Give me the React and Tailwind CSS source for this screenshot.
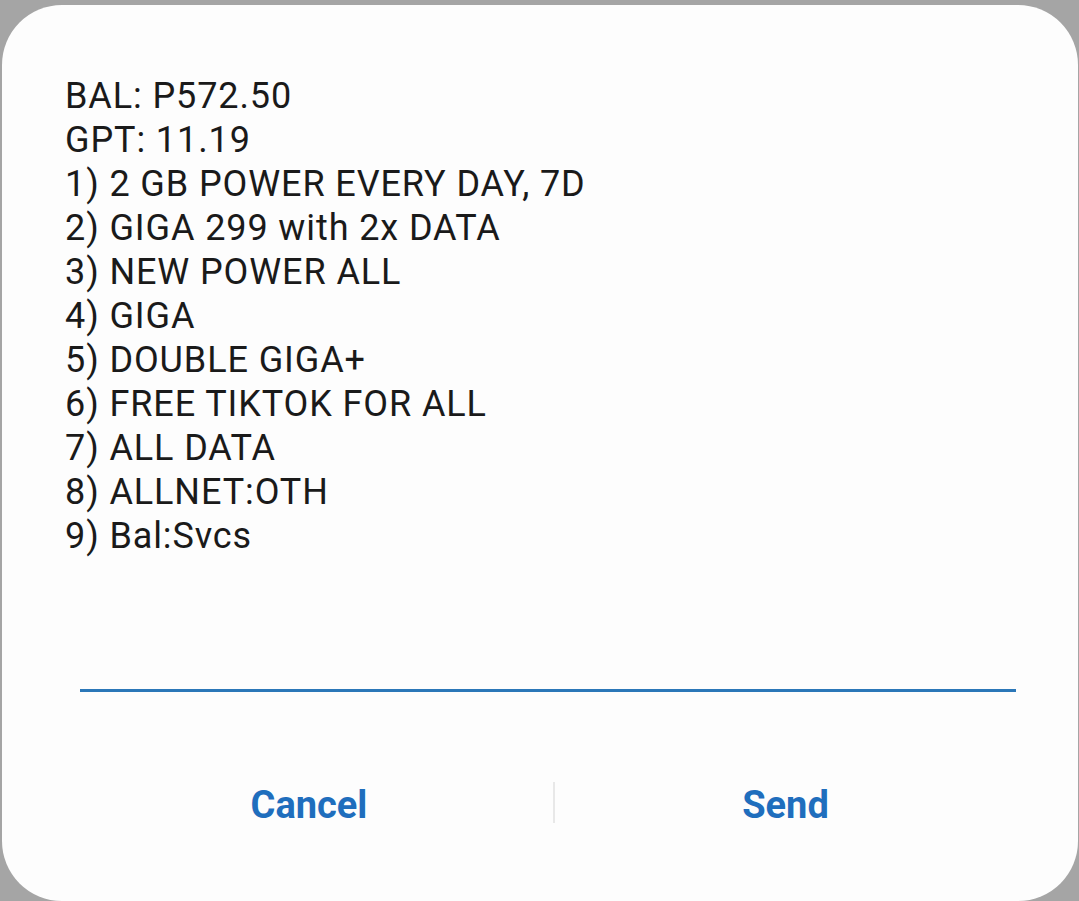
import React from 'react';

const lines = [
  'BAL: P572.50',
  'GPT: 11.19',
  '1) 2 GB POWER EVERY DAY, 7D',
  '2) GIGA 299 with 2x DATA',
  '3) NEW POWER ALL',
  '4) GIGA',
  '5) DOUBLE GIGA+',
  '6) FREE TIKTOK FOR ALL',
  '7) ALL DATA',
  '8) ALLNET:OTH',
  '9) Bal:Svcs',
];

export default function App() {
  return (
    <div className="w-[1079px] h-[901px] overflow-hidden bg-[#a5a5a5] pt-[5px] pl-[2px] pr-[1px] font-['Roboto',sans-serif]">
      {/* Dialog */}
      <div className="h-[896px] rounded-[60px] bg-[#fdfdfd] flex flex-col pl-[63px] pr-[62px]">
        {/* USSD message */}
        <div className="pt-[69px] text-[36px] leading-[44px] tracking-[0.9px] text-[#1a1a1a]">
          {lines.map((line) => (
            <div key={line} className="whitespace-pre">{line}</div>
          ))}
        </div>

        {/* Input underline */}
        <div className="mt-[131px] ml-[15px] h-[3px] bg-[#2b77b8]" />

        {/* Buttons */}
        <div className="mt-[90px] flex items-center h-[41px]">
          <button className="w-[488px] pt-[5px] text-center text-[38px] font-bold text-[#1f6ebd]">Cancel</button>
          <div className="w-[2px] h-[41px] bg-[#e8e8e8]" />
          <button className="flex-1 pt-[5px] text-center text-[38px] font-bold text-[#1f6ebd]">Send</button>
        </div>
      </div>
    </div>
  );
}
